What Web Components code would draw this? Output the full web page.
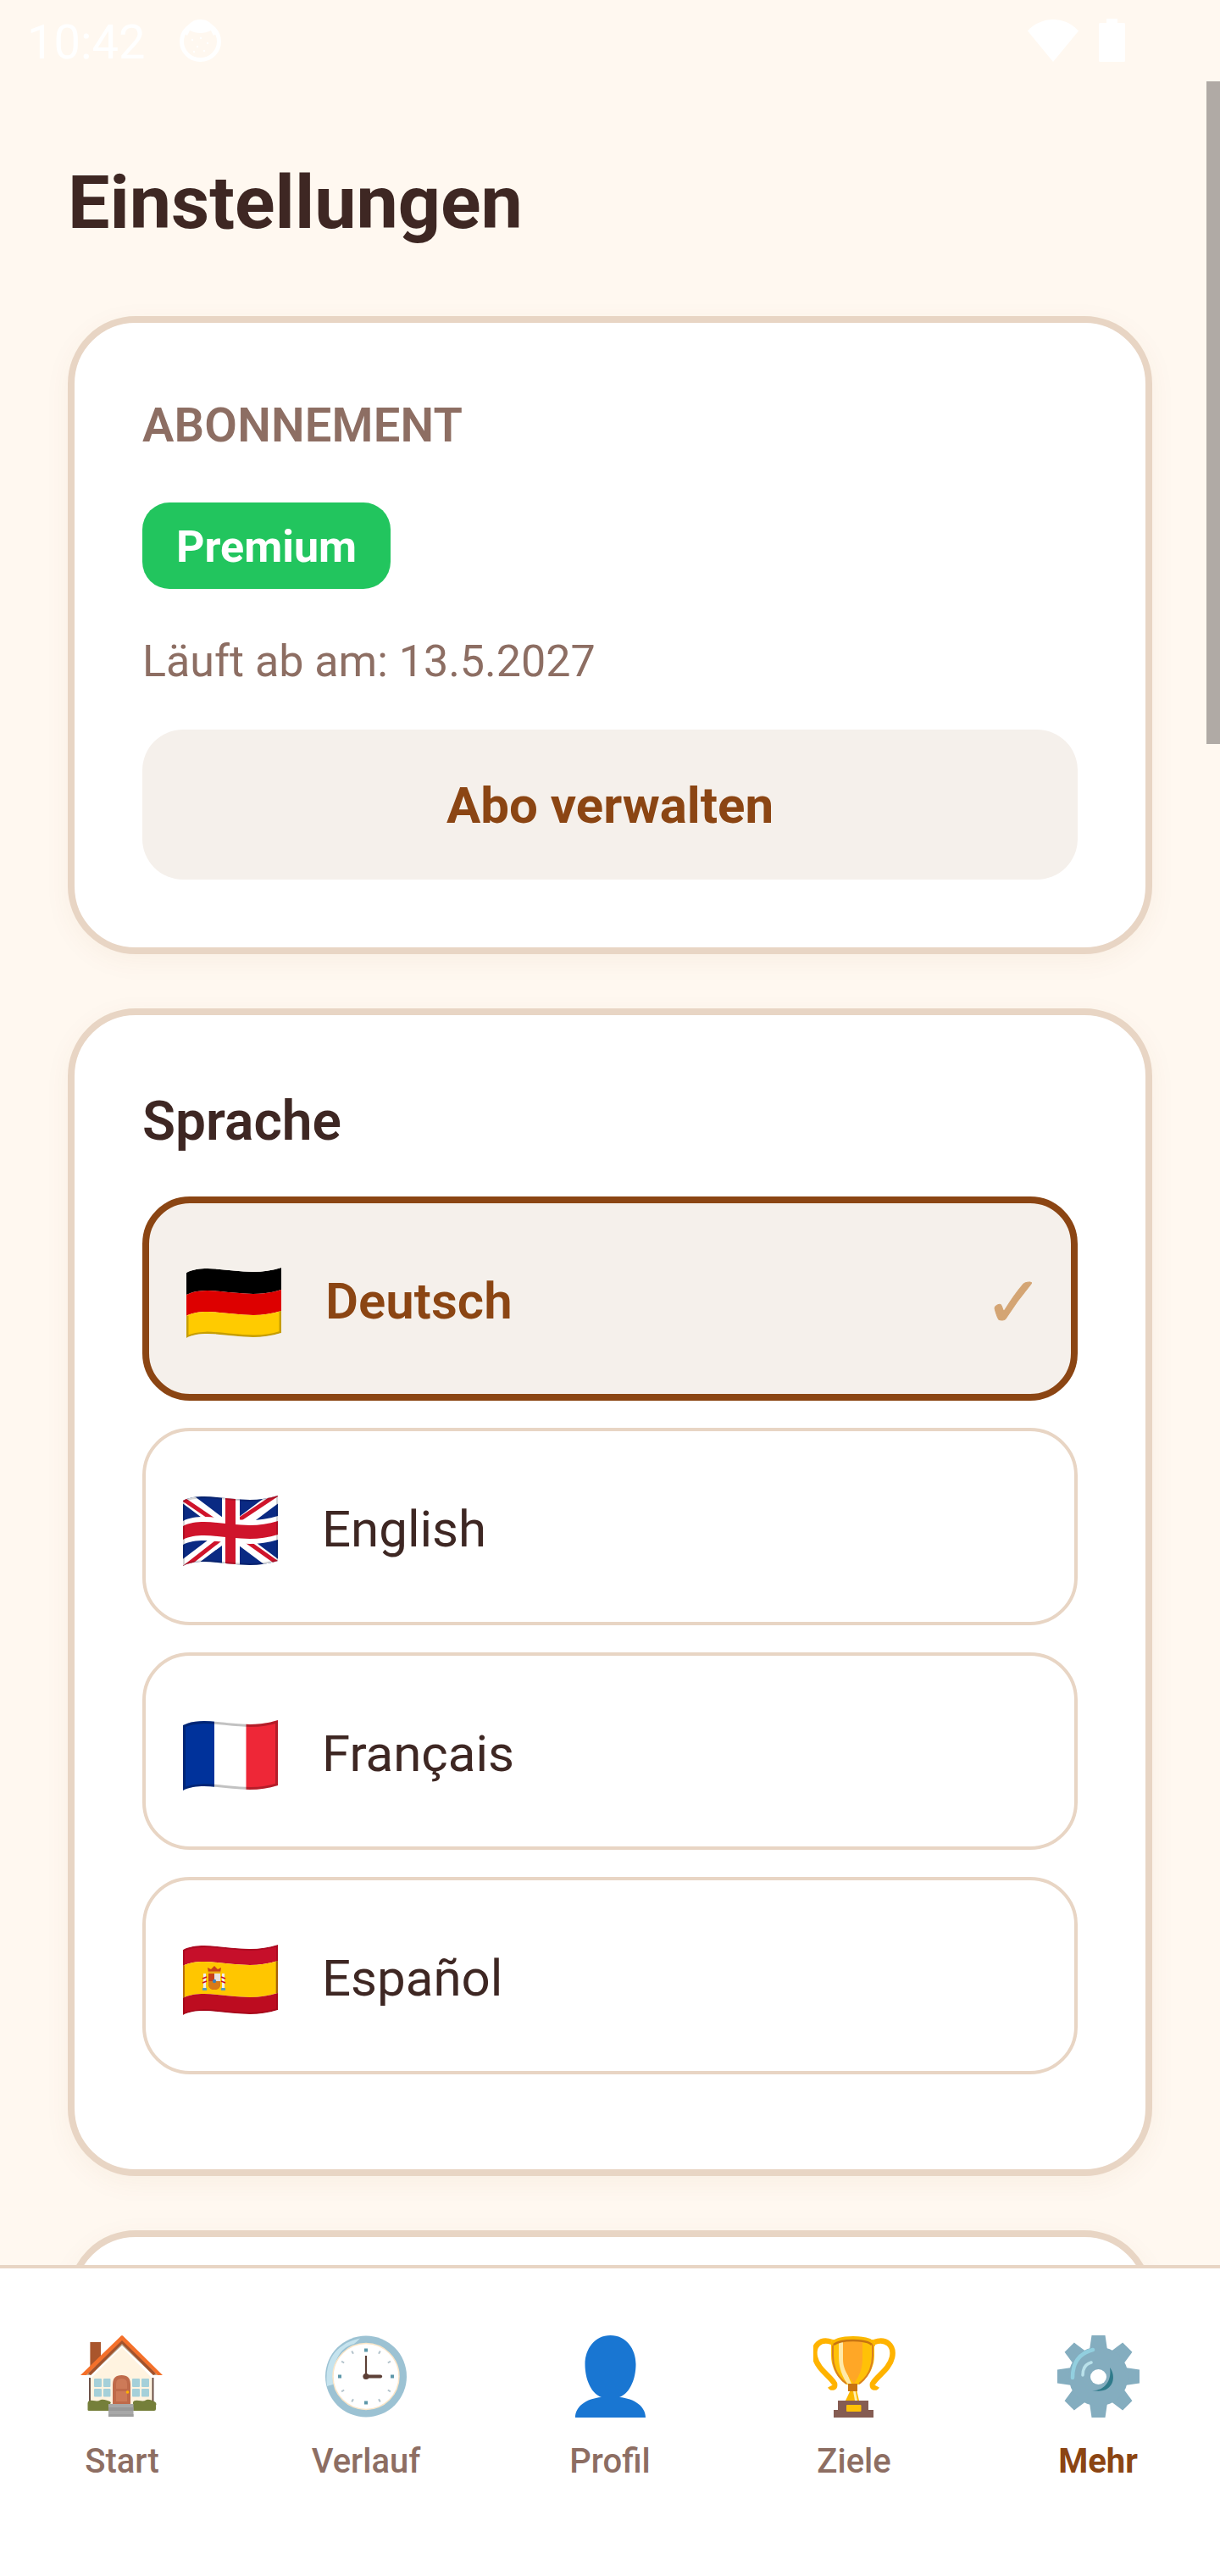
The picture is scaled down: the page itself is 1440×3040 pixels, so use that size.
<!DOCTYPE html>
<html lang="de"><head><meta charset="utf-8"><title>Einstellungen</title>
<style>
html,body{margin:0;padding:0;background:#fff8f0;font-family:Roboto,"Noto Sans",sans-serif}
</style></head>
<body>
<app-screen>
  <status-bar slot="status"></status-bar>
  <page-title>Einstellungen</page-title>
  <settings-card>
    <card-label>ABONNEMENT</card-label>
    <plan-badge>Premium</plan-badge>
    <expiry-line>Läuft ab am: 13.5.2027</expiry-line>
    <action-button>Abo verwalten</action-button>
  </settings-card>
  <settings-card>
    <card-heading>Sprache</card-heading>
    <lang-row code="de" active>Deutsch</lang-row>
    <lang-row code="gb">English</lang-row>
    <lang-row code="fr">Français</lang-row>
    <lang-row code="es">Español</lang-row>
  </settings-card>
  <settings-card></settings-card>
  <bottom-nav slot="nav">
    <nav-item icon="home">Start</nav-item>
    <nav-item icon="clock">Verlauf</nav-item>
    <nav-item icon="person">Profil</nav-item>
    <nav-item icon="trophy">Ziele</nav-item>
    <nav-item icon="gear" active>Mehr</nav-item>
  </bottom-nav>
</app-screen>
<script>
function def(name, css, html, extra){
  customElements.define(name, class extends HTMLElement{
    constructor(){super();const s=this.attachShadow({mode:'open'});
      s.innerHTML='<style>'+css+'</style>'+(typeof html==='function'?html(this):html);}
    connectedCallback(){ if(extra) extra(this); }
  });
}
def('app-screen',`
 :host{display:flex;flex-direction:column;width:1440px;height:3040px;overflow:hidden;position:relative;background:#fff8f0;color:#3e2723}
 main{flex:1;min-height:0;overflow:hidden;padding:0 80px;position:relative;display:flex;flex-direction:column}
 .thumb{position:absolute;right:0;top:0;width:16px;height:782px;background:#b0aaa5}
`,`<slot name="status"></slot><main><slot></slot><div class="thumb"></div></main><slot name="nav"></slot>`);
def('status-bar',`
 :host{display:flex;align-items:flex-start;height:96px;flex:none;position:relative;color:#fff}
 .time{position:absolute;left:32px;top:17px;font:400 56px/66px Roboto,sans-serif;color:#fff}
 svg{position:absolute;display:block}
`,`<span class="time">10:42</span>
<svg style="left:211px;top:23px" width="51" height="50" viewBox="0 0 51 50">
 <ellipse cx="25.5" cy="26" rx="22" ry="21.5" fill="none" stroke="#fff" stroke-width="5"/>
 <path d="M7 17C10 4 17 0 25.5 0S41 4 44 17L41 19 38 13C30 17 21 17 13 13L10 19Z" fill="#fff"/>
 <g fill="#fff"><circle cx="16" cy="24" r="1.2"/><circle cx="26" cy="22" r="1.2"/><circle cx="34" cy="28" r="1.2"/><circle cx="22" cy="32" r="1.2"/><circle cx="30" cy="37" r="1.2"/><circle cx="18" cy="38" r="1.2"/></g>
</svg>
<svg style="left:1213px;top:23px" width="60" height="50" viewBox="0 0 60 50"><path d="M0 13.5C16-4.5 44-4.5 60 13.5L30 50Z" fill="#fff"/></svg>
<svg style="left:1297px;top:22px" width="31" height="51" viewBox="0 0 31 51"><path d="M9 0H22V5H29.5Q31 5 31 6.500V49.500Q31 51 29.500 51H1.500Q0 51 0 49.500V6.500Q0 5 1.500 5H9Z" fill="#fff"/></svg>`);
def('page-title',`:host{display:block;flex:none;font:700 88px/104px Roboto,sans-serif;color:#3e2723;margin:91px 0 82px}`,`<slot></slot>`);
def('settings-card',`
 :host{display:block;flex:none;box-sizing:border-box;background:#fff;border:8px solid #e8d5c4;border-radius:80px;padding:80px;margin-bottom:64px;box-shadow:0 8px 32px rgba(139,69,19,.05)}
 :host(:empty){min-height:400px}
`,`<slot></slot>`);
def('card-label',`:host{display:block;font:600 56px/66px Roboto,sans-serif;color:#8d6e63;margin:8px 0 58px;letter-spacing:.2px}`,`<slot></slot>`);
def('plan-badge',`:host{display:flex;align-items:center;width:max-content;height:102px;box-sizing:border-box;padding:4px 40px 0;border-radius:32px;background:#22c55e;color:#fff;font:700 52px/62px Roboto,sans-serif}`,`<slot></slot>`);
def('expiry-line',`:host{display:block;font:400 52px/62px Roboto,sans-serif;color:#8d6e63;margin:55px 0 49px}`,`<slot></slot>`);
def('action-button',`:host{display:flex;align-items:center;justify-content:center;box-sizing:border-box;height:177px;padding-top:2px;border-radius:48px;background:#f5f0eb;color:#8b4513;font:700 60px/70px Roboto,sans-serif}`,`<slot></slot>`);
def('card-heading',`:host{display:block;font:600 64px/76px Roboto,sans-serif;color:#3e2723;margin:8px 0 50px}`,`<slot></slot>`);

function wave(t,b){return `M0 ${t+6}C28 ${t-8} 70 ${t+14} 112 ${t}V${b}C70 ${b+14} 28 ${b-8} 0 ${b+6}Z`}
const flagArt={
 de:`<path d="${wave(0,26)}" fill="#000"/><path d="${wave(26,51)}" fill="#dd0000"/><path d="${wave(51,77)}" fill="#ffcb00"/>
     <path d="M0 57V83C28 69 70 91 112 77V51" fill="none" stroke="#000" stroke-opacity=".22" stroke-width="5"/>`,
 gb:`<rect width="112" height="90" fill="#0a2a83"/>
     <path d="M0 0L112 84M112 0L0 84" stroke="#fff" stroke-width="15"/>
     <path d="M0 4L50 38M112-2L64 30M0 86L46 50M112 80L64 46" stroke="#cf142b" stroke-width="5" fill="none"/>
     <path d="${wave(24,52)}" fill="#fff"/><rect x="46" y="-2" width="21" height="92" fill="#fff"/>
     <rect x="50" y="-2" width="12" height="92" fill="#cf142b"/><path d="${wave(30,46)}" fill="#cf142b"/>
     <path d="${wave(0,77)}" fill="none" stroke="#000" stroke-opacity=".16" stroke-width="4"/>`,
 fr:`<rect width="37" height="90" fill="#00329b"/><rect x="37" width="37.500" height="90" fill="#fff"/><rect x="74.500" width="38" height="90" fill="#ee2737"/>
     <path d="${wave(0,77)}" fill="none" stroke="#000" stroke-opacity=".24" stroke-width="6"/>`,
 es:`<path d="${wave(0,19)}" fill="#c60f2a"/><path d="${wave(19,57)}" fill="#ffc600"/><path d="${wave(57,77)}" fill="#bd0c20"/>
     <path d="M112 19V57" stroke="#000" stroke-opacity=".25" stroke-width="5"/><path d="M0 25V63" stroke="#000" stroke-opacity=".15" stroke-width="4"/>
     <path d="${wave(0,77)}" fill="none" stroke="#7d0010" stroke-opacity=".35" stroke-width="4"/>
     <g>
      <rect x="24" y="34" width="3" height="18" fill="#eee"/><rect x="46" y="34" width="3" height="18" fill="#eee"/>
      <rect x="23" y="51" width="5" height="3" fill="#5a9db5"/><rect x="45" y="51" width="5" height="3" fill="#5a9db5"/>
      <path d="M23 40L28 38M23 45L28 43M45 38L50 40M45 43L50 45" stroke="#c60f2a" stroke-width="1.500"/>
      <path d="M30 34H44V46Q44 53 37 53T30 46Z" fill="#c8401a"/><rect x="37" y="34" width="7" height="9" fill="#e8e2df"/>
      <path d="M30 43H37V53Q30 53 30 46ZM37 43H44V46Q44 53 37 53Z" fill="#d97a17"/><circle cx="37" cy="43" r="2.200" fill="#3f7fb5"/>
      <path d="M30 33L29 27 33 29 37 25 41 29 45 27 44 33Z" fill="#c8401a"/><rect x="30" y="31.500" width="14" height="2" fill="#e8a317"/>
     </g>`
};
let fid=0;
def('flag-icon',`:host{display:block;flex:none;width:112px;height:84px;line-height:0}svg{overflow:hidden}`,(el)=>{
  const c=el.getAttribute('code'),id='c'+(fid++);
  return `<svg width="112" height="84" viewBox="0 0 112 84"><defs><clipPath id="${id}"><path d="${wave(0,77)}"/></clipPath></defs><g clip-path="url(#${id})">${flagArt[c]}</g></svg>`;
});
def('lang-row',`
 :host{display:flex;align-items:center;box-sizing:border-box;height:233px;margin-bottom:32px;padding:0 44px;border:4px solid #e8d5c4;border-radius:56px;background:#fff;font:400 60px/70px Roboto,sans-serif;color:#3e2723;position:relative}
 :host([active]){height:241px;border:8px solid #8b4513;background:#f5f0eb;font-weight:600;color:#8b4513}
 flag-icon{margin:10px 52px 0 0}
 .t{padding-top:6px}
 .chk{display:none;margin:8px -12px 0 auto;font:400 84px/84px "DejaVu Sans",sans-serif;color:#d4a574;-webkit-text-stroke:1px #d4a574}
 :host([active]) .chk{display:block}
`,(el)=>`<flag-icon code="${el.getAttribute('code')}"></flag-icon><span class="t"><slot></slot></span><span class="chk">✓</span>`);

const icons={
home:`<svg width="98" height="97" viewBox="-1 0 98 97">
 <rect x="10.400" y="8" width="12.600" height="28" fill="#a9552c"/>
 <path d="M48 14L10 52V84H85V52Z" fill="#fff3e0"/>
 <path d="M10 50V84M84.500 50V84" stroke="#5d4037" stroke-width="1.800"/>
 <path d="M48 5L6 47H11L48 12 85 47H90Z" fill="#bcab93"/>
 <path d="M48 0.300Q49 0 50 1.500L96 47H90L48 7 6 47H-1L46 1.500Q47 0 48 .3Z" fill="#f4702a"/>
 <path d="M48 6L8 45 11 47 48 10 85 47 88 45Z" fill="#a0522d"/>
 <g fill="#a5d0d9"><rect x="15" y="51" width="9" height="10" rx="1"/><rect x="26" y="51" width="8.500" height="10" rx="1"/><rect x="15" y="63" width="9" height="9.500" rx="1"/><rect x="26" y="63" width="8.500" height="9.500" rx="1"/>
 <rect x="60" y="51" width="9" height="10" rx="1"/><rect x="71" y="51" width="9" height="10" rx="1"/><rect x="60" y="63" width="9" height="9.500" rx="1"/><rect x="71" y="63" width="9" height="9.500" rx="1"/></g>
 <path d="M37 81V58Q37 47 47.500 47T58 58V81Z" fill="#bf6a4a"/>
 <path d="M41 63V57Q41 51 47.500 51T54 57V63Z" fill="#cd7a58"/><rect x="41" y="66" width="13" height="12" fill="#cd7a58"/>
 <circle cx="54.500" cy="67" r="1.800" fill="#ffb300"/>
 <path d="M7.500 88V80Q8 76 14 77T22 76.500 31 77 32.500 82V89H9Q7.500 89 7.500 88Z" fill="#757f3a"/>
 <path d="M61 89V79Q62 76 68 77T76 76.500 84 77 88 83V87Q88 89 86 89Z" fill="#757f3a"/>
 <rect x="32" y="81" width="29.500" height="15" fill="#a8a8a8"/><rect x="32" y="85" width="29.500" height="4" fill="#999"/><rect x="32" y="93" width="29.500" height="3" fill="#9e9e9e"/>
</svg>`,
clock:`<svg width="96" height="97" viewBox="0 0 96 97">
 <circle cx="48" cy="48.500" r="48" fill="#9cc2d3"/>
 <path d="M2 60Q-2 26 22 11 29 6 41 3.500 37 8 34 10 18 14 12 32 8 46 9 58Z" fill="#c5e3ee"/>
 <circle cx="48" cy="48.500" r="39" fill="#fff" stroke="#fbe6c8" stroke-width="1.500"/>
 <g fill="#5d97a9"><rect x="46" y="15.500" width="4" height="4"/><rect x="46" y="77.500" width="4" height="4"/><rect x="15" y="46.500" width="4" height="4"/><rect x="77" y="46.500" width="4" height="4"/></g>
 <g stroke="#b4c4cc" stroke-width="2"><path d="M63 21.700L64.800 18.600M73.800 32.500L76.900 30.700M73.800 64.500L76.900 66.300M63 75.300L64.800 78.400M33 75.300L31.200 78.400M22.200 64.500L19.100 66.300M22.200 32.500L19.100 30.700M33 21.700L31.200 18.600"/></g>
 <path d="M48 24V48.500" stroke="#5d4037" stroke-width="2.200"/><path d="M48 48.500H65" stroke="#5d4037" stroke-width="4.200" stroke-linecap="round"/>
 <circle cx="48" cy="48.500" r="3.600" fill="#5d4037"/>
</svg>`,
person:`<svg width="83" height="97" viewBox="0 0 83 97"><path d="M41.500 0C60 0 71.500 16 71.500 34 71.500 52 64 69 52 73 70 74.500 83 84 83 97H0C0 84 13 74.500 31 73 19 69 11.500 52 11.500 34 11.500 16 23 0 41.500 0Z" fill="#1976d2"/></svg>`,
trophy:`<svg width="97" height="97" viewBox="0 0 97 97">
 <path d="M22 8C8 3-1 12 2 26 5 40 20 48 25 57 26 63 21 62 20 60" fill="none" stroke="#ffb300" stroke-width="6.500"/>
 <path d="M72 8C86 3 96 12 93 26 90 40 75 48 70 57 69 63 74 62 75 60" fill="none" stroke="#ffb300" stroke-width="6.500"/>
 <path d="M46 60H50L54 77H38Z" fill="#fbb800"/><path d="M46 60H48.500L52 77H49Z" fill="#fff0b3"/>
 <path d="M21 5H72V24C72 40 62 52 54 58H39C30 52 21 40 21 24Z" fill="#ffc107"/>
 <path d="M30 5H38V30C38 42 42 50 45 57H40C33 47 30 37 30 24Z" fill="#ffe9a8"/>
 <path d="M35 5H58V28C58 42 52 51 48 57 43 50 35 42 35 28Z" fill="#ffa726"/>
 <path d="M23 10V24C23 40 31 51 39 57M70 10V24C70 40 62 51 54 57" fill="none" stroke="#d9801f" stroke-width="2"/>
 <path d="M21 9Q25 1 47 1T73 9V13Q66 6 47 6T21 13Z" fill="#fbb800"/><path d="M24 11Q30 6 47 6T69 11" fill="none" stroke="#c77412" stroke-width="2.500"/>
 <rect x="41" y="57" width="11" height="9" fill="#c77412"/>
 <path d="M29 77H65V88H71V97H24V88H29Z" fill="#855c52"/><rect x="39" y="82" width="17.500" height="8" rx="1" fill="#ffc107"/>
</svg>`,
gear:`<svg width="97" height="97" viewBox="0 0 97 97"><g transform="translate(48.500 48.500)" fill="#84adbf">
 ${[0,45,90,135,180,225,270,315].map(a=>`<path transform="rotate(${a})" d="M-8-48.500H8L11-28H-11Z"/>`).join('')}
 <circle r="35"/></g>
 <path d="M18 50C18 32 26 21 42 17" fill="none" stroke="#92cfdf" stroke-width="4.500" stroke-linecap="round"/>
 <path d="M30 47C30 40 33 34 40 32" fill="none" stroke="#b9e1ea" stroke-width="3.500" stroke-linecap="round"/>
 <path d="M62 38C71 50 65 70 41 65 52 66 65 57 62 38Z" fill="#2f7a8a"/>
 <ellipse cx="48.500" cy="49" rx="9.500" ry="9" fill="#fff"/>
</svg>`};
def('nav-icon',`:host{display:flex;justify-content:center;align-items:flex-end;height:98px}svg{display:block}`,(el)=>icons[el.getAttribute('name')]);
def('nav-item',`
 :host{display:flex;flex:1 1 0;flex-direction:column;align-items:center;font:500 40px/48px Roboto,sans-serif;color:#8d6e63}
 :host([active]){font-weight:700;color:#8b4513}
 .l{margin-top:28px}
`,(el)=>`<nav-icon name="${el.getAttribute('icon')}"></nav-icon><div class="l"><slot></slot></div>`);
def('bottom-nav',`:host{display:flex;flex:none;box-sizing:border-box;height:367px;border-top:4px solid #e8d5c4;background:#fff;padding-top:78px;position:relative;z-index:1}`,`<slot></slot>`);
</script>
</body></html>
